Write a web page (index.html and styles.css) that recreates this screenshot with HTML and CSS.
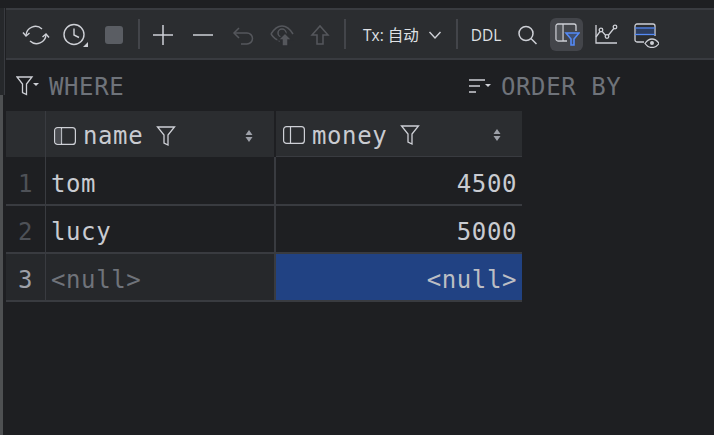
FILE: index.html
```html
<!DOCTYPE html>
<html lang="zh">
<head>
<meta charset="utf-8">
<title>Result</title>
<link rel="stylesheet" href="styles.css">
</head>
<body>
<div class="app">
  <div class="edge"><div class="edge-top"></div><div class="edge-thumb"></div></div>
  <div class="main">
  <div class="toolbar">
    <span class="tool"><svg width="28" height="28" viewBox="0 0 28 28" fill="none" stroke="#ced0d6" stroke-width="1.4"><path d="M4 14.500a9.500 9.500 0 0 1 16-6.500"/><path d="M24 13.500a9.500 9.500 0 0 1-16 6.500"/><path d="M1 11.500l3 3.500 3.500-3"/><path d="M20.500 16l3.500-3 3 3.500"/></svg></span>
    <span class="tool"><svg width="28" height="28" viewBox="0 0 28 28" fill="none" stroke="#ced0d6" stroke-width="1.4"><circle cx="13" cy="13.500" r="10"/><path d="M13 7.500v6.500l5 2.500"/><path d="M22 26h5v-5z" fill="#ced0d6" stroke="none"/></svg></span>
    <span class="tool"><span class="stop"></span></span>
    <span class="sep sep-a"></span>
    <span class="tool narrow"><svg width="24" height="24" viewBox="0 0 24 24" fill="none" stroke="#ced0d6" stroke-width="1.5"><path d="M12 2v20M2 12h20"/></svg></span>
    <span class="tool narrow"><svg width="24" height="24" viewBox="0 0 24 24" fill="none" stroke="#ced0d6" stroke-width="1.5"><path d="M2 12h20"/></svg></span>
    <span class="tool narrow"><svg width="24" height="24" viewBox="0 0 24 24" fill="none" stroke="#55575c" stroke-width="1.5"><path d="M8 5L3 10l5 5"/><path d="M3 10h13a5.500 5.500 0 0 1 0 11H10"/></svg></span>
    <span class="tool narrow"><svg width="28" height="28" viewBox="0 0 28 28" fill="none" stroke="#55575c" stroke-width="1.5"><path d="M2 13c3-5 7-8 11-8s8 3 11 8"/><path d="M2 13c2 3 5 6 9 7"/><circle cx="13" cy="12" r="4"/><path d="M13 25v-6h-4l7-7 7 7h-4v6z" fill="#55575c" stroke="#2b2d30"/></svg></span>
    <span class="tool arrow"><svg width="24" height="24" viewBox="0 0 24 24" fill="none" stroke="#55575c" stroke-width="1.5"><path d="M9 21v-9H4l8-9 8 9h-5v9z"/></svg></span>
    <span class="sep sep-b"></span>
    <span class="tx">Tx: 自动<svg class="chev" width="14" height="14" viewBox="0 0 14 14" fill="none" stroke="#ced0d6" stroke-width="1.4"><path d="M1.500 4l5.500 6 5.500-6"/></svg></span>
    <span class="sep sep-c"></span>
    <span class="ddl">DDL</span>
    <span class="tool search"><svg width="24" height="24" viewBox="0 0 24 24" fill="none" stroke="#ced0d6" stroke-width="1.500"><circle cx="11" cy="10.500" r="7"/><path d="M16 15.500l5.500 5.500"/></svg></span>
    <span class="tool active"><svg width="26" height="26" viewBox="0 0 26 26" fill="none" stroke="#ced0d6" stroke-width="1.300"><path d="M13 19H4a2 2 0 0 1-2-2V4a2 2 0 0 1 2-2h16a2 2 0 0 1 2 2v5"/><path d="M9 2v17"/><path d="M2.500 3h6v15.500h-6z" fill="#6a6c72" fill-opacity=".35" stroke="none"/><path d="M12 11h13l-5 6v6h-3v-6z" fill="#3574f0" fill-opacity=".25" stroke="#548af7" stroke-width="1.600"/></svg></span>
    <span class="tool chart"><svg width="26" height="26" viewBox="0 0 26 26" fill="none" stroke="#ced0d6" stroke-width="1.300"><path d="M2 3v18h21"/><path d="M2 15l5-7 6 7 8-10"/><circle cx="7" cy="8" r="1.800" fill="#2b2d30"/><circle cx="13" cy="14.500" r="1.800" fill="#2b2d30"/><circle cx="21" cy="5" r="1.800" fill="#2b2d30"/></svg></span>
    <span class="tool"><svg width="26" height="26" viewBox="0 0 26 26" fill="none" stroke="#ced0d6" stroke-width="1.300"><path d="M11 20H4a2 2 0 0 1-2-2V4a2 2 0 0 1 2-2h16a2 2 0 0 1 2 2v10"/><path d="M2.700 6.500h19v6h-19z" fill="#3574f0" fill-opacity=".25" stroke="none"/><path d="M2 6h20" stroke="#548af7"/><path d="M2 12.500h20" stroke="#548af7"/><path d="M12 21.500c2-3 4.500-4.500 7-4.500s5 1.500 7 4.500c-2 3-4.500 4-7 4s-5-1-7-4z" fill="#2b2d30"/><circle cx="19" cy="21" r="2" fill="#ced0d6" stroke="none"/></svg></span>
  </div>
  <div class="filters">
    <div class="filter where"><svg width="24" height="24" viewBox="0 0 24 24" fill="none" stroke="#ced0d6" stroke-width="1.300"><path d="M1 2h15l-5.500 7v10.500l-4-2V9z"/><path d="M17 8h6l-3 3z" fill="#ced0d6" stroke="none"/></svg><span>WHERE</span></div>
    <div class="filter order"><svg width="24" height="24" viewBox="0 0 24 24" fill="none" stroke="#ced0d6" stroke-width="1.500"><path d="M1 5h16M1 11h11M1 17h7"/><path d="M17 9h6l-3 3z" fill="#ced0d6" stroke="none"/></svg><span>ORDER BY</span></div>
  </div>
  <div class="grid">
    <div class="corner"></div>
    <div class="head name-col"><svg class="panel" width="22" height="20" viewBox="0 0 22 20" fill="none" stroke="#ced0d6" stroke-width="1.200"><rect x=".6" y="1.600" width="20.800" height="16.800" rx="3"/><path d="M7.500 2v16"/><path d="M1 3h6.500v14H1z" fill="#6a6c72" fill-opacity=".5" stroke="none"/></svg><span class="title">name</span><svg class="funnel" width="20" height="22" viewBox="0 0 20 22" fill="none" stroke="#ced0d6" stroke-width="1.300"><path d="M1.500 2h17l-6.500 8v10l-4-2v-8z"/></svg><svg class="sort" width="10" height="14" viewBox="0 0 10 14" fill="#9da0a8"><path d="M5 1l3.500 5h-7zM5 13L1.500 8h7z"/></svg></div>
    <div class="head money-col"><svg class="panel" width="22" height="20" viewBox="0 0 22 20" fill="none" stroke="#ced0d6" stroke-width="1.200"><rect x=".6" y="1.600" width="20.800" height="16.800" rx="3"/><path d="M7.500 2v16"/></svg><span class="title">money</span><svg class="funnel" width="20" height="22" viewBox="0 0 20 22" fill="none" stroke="#ced0d6" stroke-width="1.300"><path d="M1.500 2h17l-6.500 8v10l-4-2v-8z"/></svg><svg class="sort" width="10" height="14" viewBox="0 0 10 14" fill="#9da0a8"><path d="M5 1l3.500 5h-7zM5 13L1.500 8h7z"/></svg></div>

    <div class="num first">1</div>
    <div class="cell first">tom</div>
    <div class="cell right first">4500</div>

    <div class="num">2</div>
    <div class="cell">lucy</div>
    <div class="cell right">5000</div>

    <div class="num current">3</div>
    <div class="cell current null">&lt;null&gt;</div>
    <div class="cell right selected">&lt;null&gt;</div>
  </div>
  </div>
</div>
</body>
</html>
```

FILE: styles.css
```css
* { box-sizing: border-box; }
html, body { margin: 0; height: 100%; background: #1e1f22; overflow: hidden; }
.app {
  width: 714px;
  height: 435px;
  display: flex;
  font-family: "DejaVu Sans Mono", monospace;
  letter-spacing: 0.6px;
  color: #bcbec4;
}
.edge {
  width: 6px;
  flex: none;
  padding-top: 8px;
  display: flex;
  flex-direction: column;
}
.edge-top { width: 5px; height: 87px; background: #26282b; border-right: 1px solid #393b40; }
.edge-thumb { width: 3px; flex: 1; background: #4e5052; }
.main { flex: 1; padding-top: 8px; min-width: 0; }
.toolbar {
  height: 52px;
  display: flex;
  align-items: center;
  background: #2b2d30;
  border-top: 2px solid #393b40;
  border-bottom: 2px solid #393b40;
  padding-left: 10px;
  letter-spacing: 0;
}
.tool {
  width: 39px;
  height: 34px;
  flex: none;
  display: flex;
  align-items: center;
  justify-content: center;
  padding-top: 1px;
}
.tool.narrow { width: 40px; }
.tool.arrow { width: 34px; }
.tool.search { margin-left: 6px; }
.tool.active { background: #43454a; border-radius: 6px; width: 33px; height: 33px; margin-left: 4px; }
.tool.chart { margin-left: 4px; }
.stop { width: 18px; height: 18px; border-radius: 3px; background: #5a5d63; }
.sep { width: 2px; height: 30px; background: #43454a; flex: none; }
.sep-a { margin: 0 3px 0 5px; }
.sep-b { margin: 0 17px 0 7px; }
.sep-c { margin-left: 14px; }
.tx {
  display: flex;
  align-items: center;
  font-family: "Open Sans", "Noto Sans CJK SC", sans-serif;
  font-size: 15.500px;
  color: #dfe1e5;
  padding-top: 1px;
}
.chev { margin-left: 9px; }
.ddl {
  font-family: "Open Sans", sans-serif;
  font-size: 15.500px;
  color: #dfe1e5;
  margin-left: 13px;
  padding-top: 1px;
}
.filters {
  height: 51px;
  display: flex;
  align-items: center;
  font-size: 24px;
  color: #6f737a;
  padding-top: 2px;
}
.filter { display: flex; align-items: center; }
.where { width: 462px; padding-left: 10px; }
.where span { margin-left: 9px; }
.order span { margin-left: 9px; }
.grid {
  display: grid;
  grid-template-columns: 40px 230px 246px;
  grid-template-rows: 46px 49px 48px 48px;
  width: 516px;
  font-size: 24px;
}
.corner, .head { background: #2b2d30; }
.corner { border-right: 1px solid #393b40; }
.head {
  display: flex;
  align-items: center;
  padding-left: 8px;
  padding-top: 3px;
  border-right: 2px solid #1e1f22;
  color: #c9cbd1;
}
.money-col { border-right: 0; border-bottom: 1px solid #393b40; padding-left: 7px; }
.title { margin-left: 7px; padding-top: 1px; }
.funnel { margin-left: 13px; }
.sort { margin-left: auto; margin-right: 20px; }
.num, .cell {
  display: flex;
  align-items: center;
  border-bottom: 2px solid #393b40;
  border-right: 2px solid #393b40;
  padding-top: 5px;
}
.num {
  justify-content: center;
  color: #4e5157;
  border-right-width: 1px;
}
.cell { padding-left: 5px; color: #c9cbd1; }
.right { justify-content: flex-end; padding-right: 5px; padding-left: 0; border-right: 0; }
.first { padding-top: 7px; }
.current { background: #26282b; }
.num.current { color: #9da0a8; }
.null { color: #6f737a; }
.selected { background: #214283; color: #bcbec4; }
```
